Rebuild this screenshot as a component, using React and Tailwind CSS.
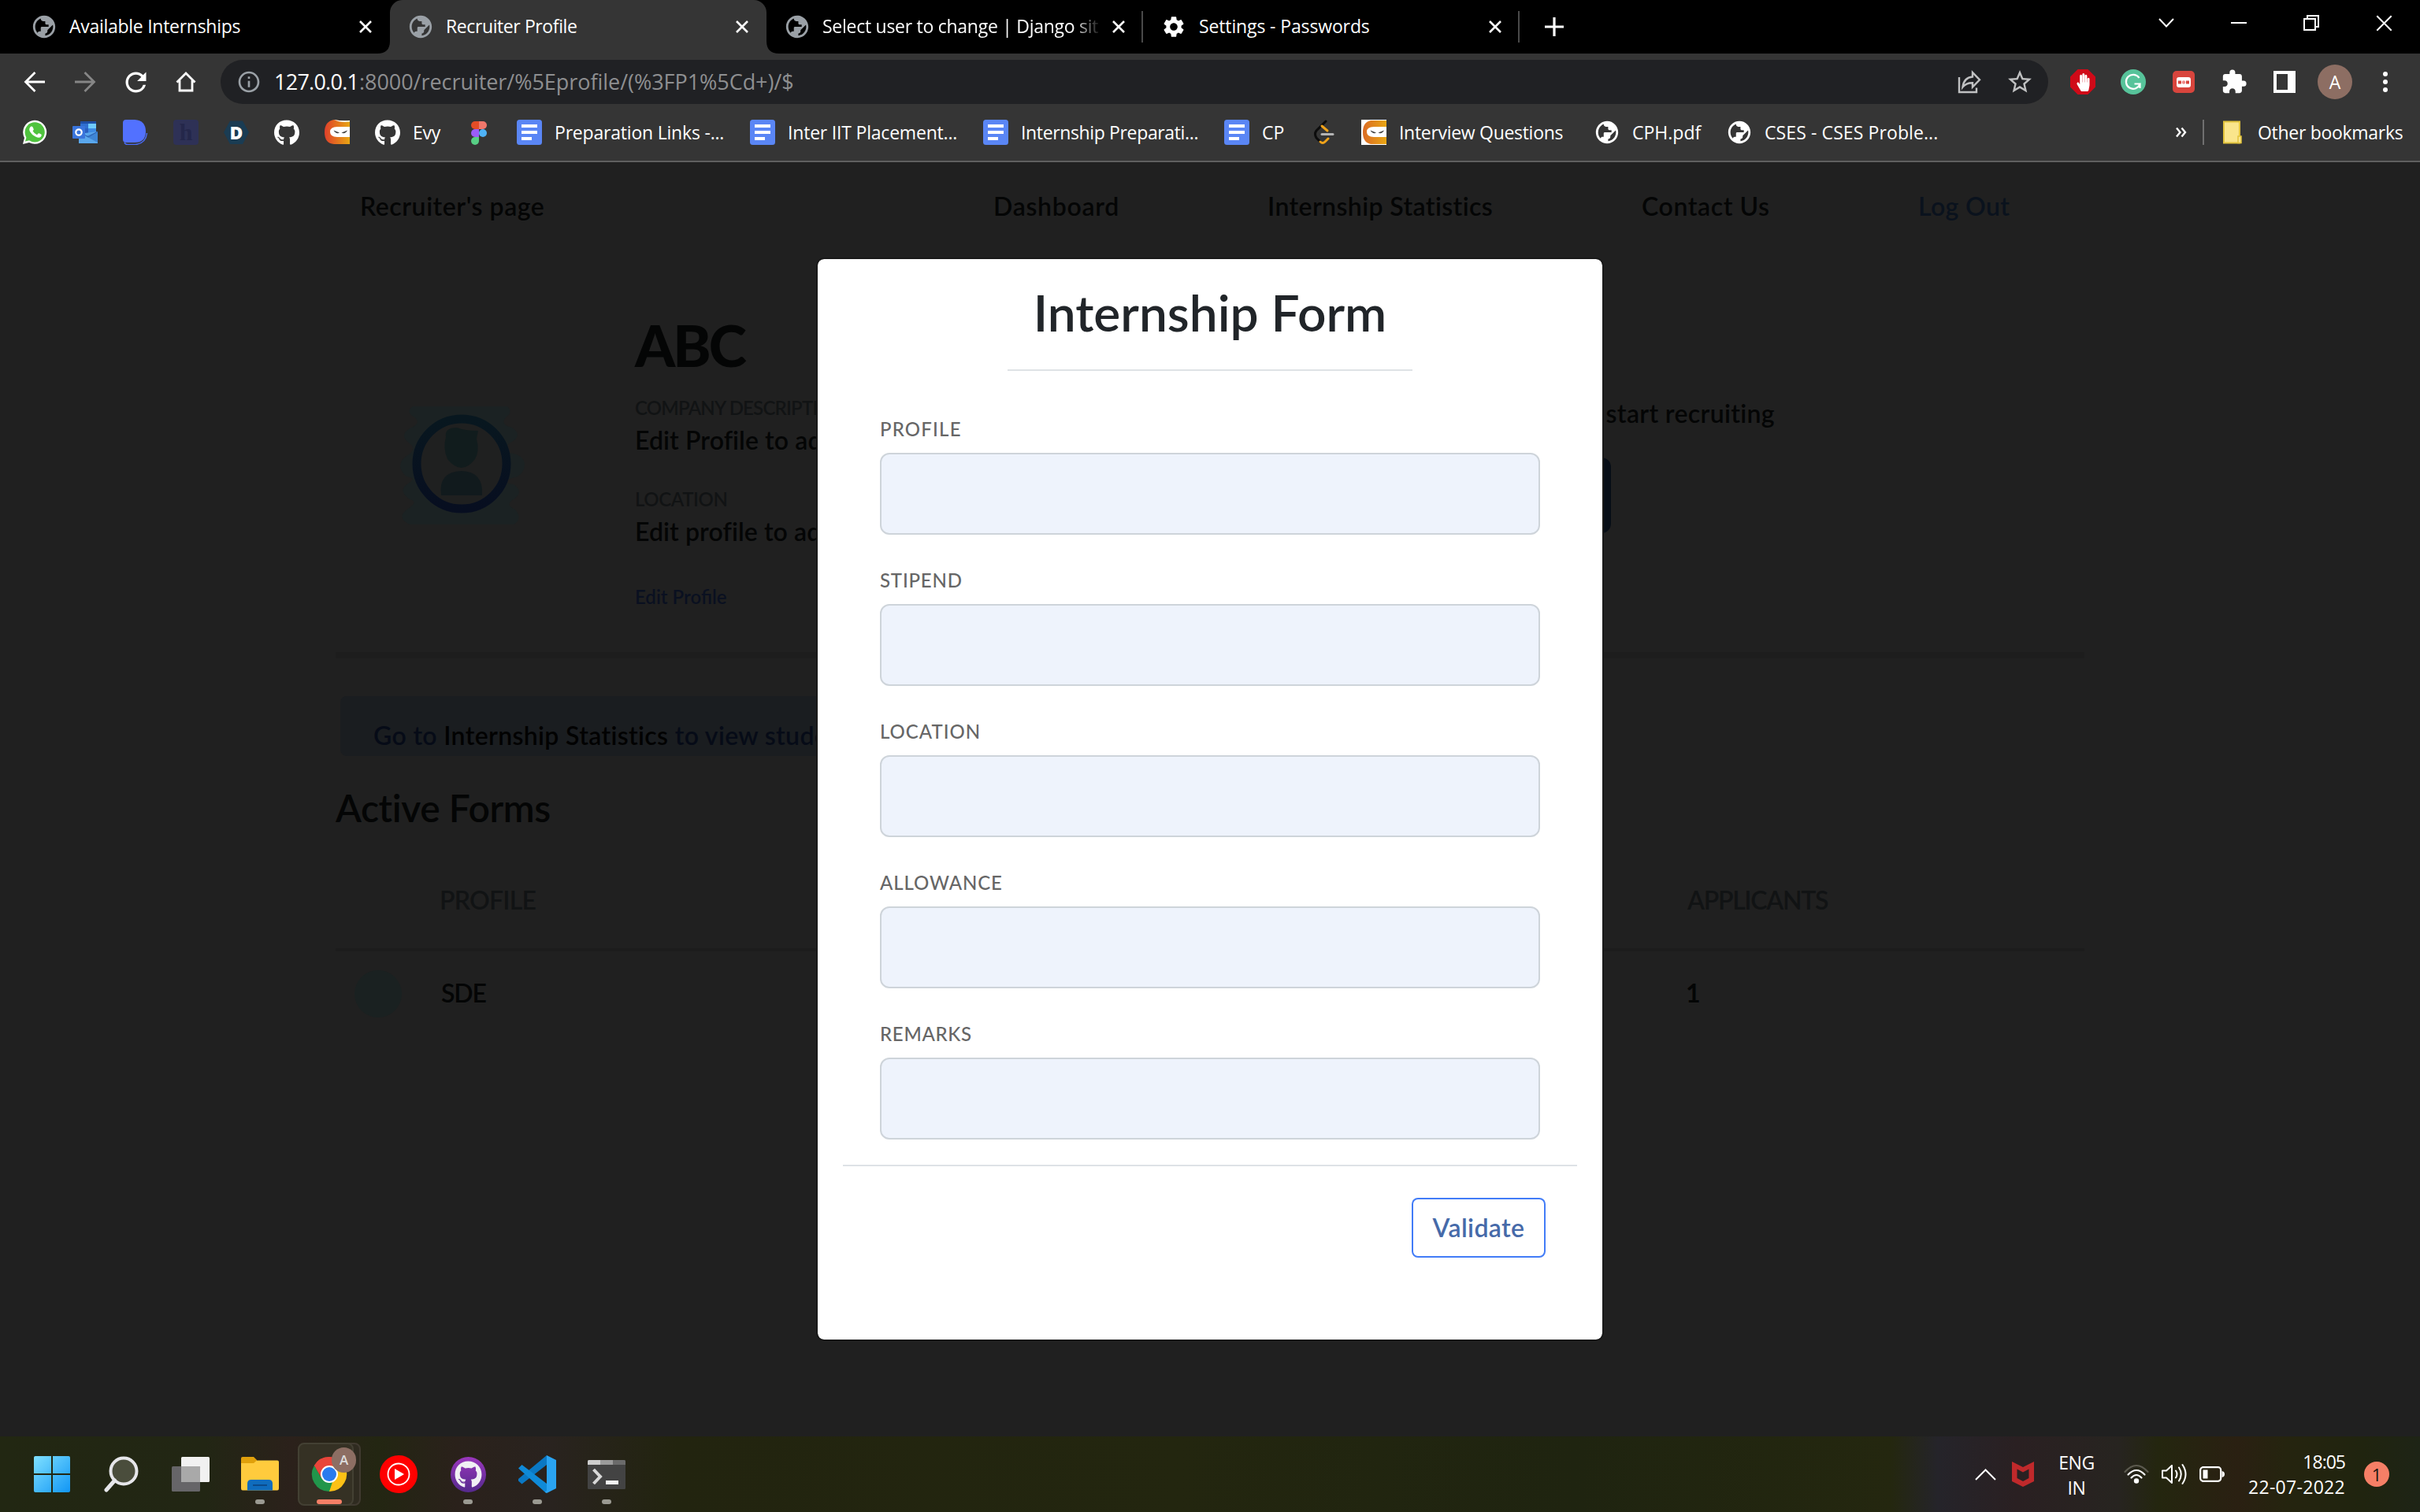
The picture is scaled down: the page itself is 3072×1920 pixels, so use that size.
import React from 'react';
import { MdPublic, MdSettings, MdRefresh, MdStarBorder, MdInfoOutline, MdExtension } from 'react-icons/md';
import { FaGithub, FaHandPaper } from 'react-icons/fa';

const UI = "font-['Open_Sans','Noto_Sans',sans-serif]";
const WEB = "font-['Lato','Open_Sans',sans-serif]";

/* ---------- icons ---------- */

const Cross = ({ s = 16, w = 2.6 }) => (
  <svg width={s} height={s} viewBox="0 0 16 16" stroke="#fff" strokeWidth={w} fill="none">
    <path d="M1 1L15 15M15 1L1 15" />
  </svg>
);

const DocsIcon = () => (
  <svg width="32" height="32" viewBox="0 0 32 32">
    <rect width="32" height="32" rx="3.5" fill="#5a86f5" />
    <path d="M6 6h20v4H6zM6 14h20v4H6zM6 22h13v4H6z" fill="#fff" />
  </svg>
);

const NinjaIcon = ({ light, id }) => (
  <svg width="32" height="32" viewBox="0 0 32 32">
    <defs>
      <linearGradient id={id}>
        <stop offset="0" stopColor={light ? '#db6b24' : '#e0402b'} />
        <stop offset="1" stopColor="#e8a613" />
      </linearGradient>
    </defs>
    {light && <rect width="32" height="32" fill="#fff" />}
    <path d={light ? 'M32 1v30H12Q2 29 2 16T12 1z' : 'M32 1Q22 2 12 0Q0 2 0 16T12 31H32z'} fill={`url(#${id})`} />
    {!light && <path d="M12 0Q22 2 32 1V2.5Q20 4 12 0z" fill="#fff" />}
    <path d="M32 9H16Q7 9 7 15.500T16 22H32z" fill="#fff" />
    <path d="M11.500 13.500L19 16.500Q15 19 11.500 13.500zM29 13.500L21.500 16.500Q26 19 29 13.500z" fill="#444" />
  </svg>
);

const OutlookIcon = () => (
  <svg width="32" height="32" viewBox="0 0 32 32">
    <path d="M10 2h20v10H10z" fill="#1f4fa5" />
    <path d="M10 5h10v7H10z" fill="#2f6fd0" />
    <path d="M20 5h10v7H20z" fill="#6fcbfb" />
    <path d="M10 11h10v7H10z" fill="#2a5fc0" />
    <path d="M20 11h10v7H20z" fill="#3d8ae4" />
    <path d="M8 18L32 15V30H8z" fill="#5aa7ec" />
    <path d="M32 15V29L17 21z" fill="#3f86d6" />
    <path d="M10 16L20 22L32 15" fill="none" stroke="#2b5eae" />
    <rect x="0" y="8" width="16" height="16" rx="1" fill="#3a75dc" />
    <circle cx="8" cy="16" r="3.700" fill="none" stroke="#fff" strokeWidth="2.200" />
  </svg>
);

const DIcon = () => (
  <svg width="32" height="32" viewBox="0 0 32 32">
    <path d="M2 29Q3 31.500 6 31.500H16Q29 30 30.500 17" fill="none" stroke="#4a6cf7" strokeWidth="1.600" />
    <path d="M4 0H15Q29 1 29 15T15 29H4Q0 29 0 25V4Q0 0 4 0z" fill="#5271ff" />
  </svg>
);

const HIcon = () => (
  <div className="flex h-8 w-8 items-center justify-center rounded bg-[#2e3156]">
    <span className="font-['Liberation_Serif',serif] text-[30px] leading-[28px] font-bold text-[#24274a]">h</span>
  </div>
);

const HexIcon = () => (
  <div className="relative flex h-8 w-8 items-center justify-center">
    <svg className="absolute inset-0" width="32" height="32" viewBox="0 0 32 32">
      <path d="M8 1.500H24L32 16L24 31H8L0 16z" fill="#1a3c53" />
    </svg>
    <span className={`${UI} relative text-[23px] leading-[32px] font-extrabold text-white`}>D</span>
  </div>
);

const FigmaIcon = () => (
  <svg width="32" height="32" viewBox="0 0 32 32">
    <path d="M16 2H11a5 5 0 0 0 0 10h5z" fill="#e44d26" />
    <path d="M16 2h5a5 5 0 0 1 0 10h-5z" fill="#f0776b" />
    <path d="M16 12H11a5 5 0 0 0 0 10h5z" fill="#9c5cf8" />
    <circle cx="21" cy="17" r="5" fill="#4fb3f7" />
    <path d="M11 22h5v5a5 5 0 1 1-5-5z" fill="#57cf85" />
  </svg>
);

const LeetIcon = () => (
  <svg width="32" height="32" viewBox="0 0 32 32" fill="none" strokeLinecap="round" strokeWidth="3">
    <path d="M19 2L7 14Q4 18 7 23L12 28" stroke="#0c0c0c" />
    <path d="M14 8L21 14" stroke="#f0a31a" />
    <path d="M22 24L18 28Q15 31 12 28" stroke="#f0a31a" />
    <path d="M14 18.500H28" stroke="#b4b4b4" />
  </svg>
);

const Whatsapp = () => (
  <svg width="32" height="32" viewBox="0 0 32 32">
    <path d="M1 31L3 23A15 15 0 1 1 9 29z" fill="#fff" />
    <circle cx="16.200" cy="15.800" r="12.600" fill="#4fc33e" />
    <path d="M4 27.500L6 21L10 26z" fill="#4fc33e" />
    <path d="M11.500 8.500Q13 8 13.800 9.800L14.800 12.200Q14.800 13.200 13.500 14.300Q15.500 17.800 19 19.200L20.500 17.600Q21.300 17 22.200 17.500L24.500 18.800Q25.200 19.500 24 21.500Q21.800 23.800 17.500 21.800Q12 19.300 9.500 14Q8.500 10.500 11.500 8.500z" fill="#fff" />
  </svg>
);

const Globe = ({ c }) => <MdPublic size={34} color={c} className="-mx-px shrink-0 -scale-x-100" />;

const Gh = () => <FaGithub size={33} color="#fff" />;

/* ---------- tab strip ---------- */

const TABS = [
  { t: 'Available Internships', k: 'tracking-[-0.28px]' },
  { t: 'Recruiter Profile', k: 'tracking-[-0.4px]', active: true },
  { t: 'Select user to change | Django sit', k: 'tracking-[-0.27px]', fade: true, sep: true },
  { t: 'Settings - Passwords', k: 'tracking-[-0.13px]', gear: true, sep: true },
];

const Tab = ({ tab }) => (
  <div className={`relative flex h-[68px] w-[478px] shrink-0 items-center ${tab.active ? 'rounded-t-2xl bg-[#353535]' : ''}`}>
    {tab.active && (
      <>
        <svg className="absolute bottom-0 -left-4" width="16" height="16"><path d="M16 0V16H0Q16 16 16 0z" fill="#353535" /></svg>
        <svg className="absolute -right-4 bottom-0" width="16" height="16"><path d="M0 0V16H16Q0 16 0 0z" fill="#353535" /></svg>
      </>
    )}
    <div className="ml-[22px] flex w-[34px] justify-center">
      {tab.gear ? <MdSettings size={32} color="#fff" /> : <Globe c="#9aa0a6" />}
    </div>
    <div className={`ml-[15px] h-[34px] w-[354px] text-[23px] leading-[32px] whitespace-nowrap text-white ${tab.k} ${tab.fade ? '[mask-image:linear-gradient(to_right,black_318px,transparent_354px)]' : ''}`}>{tab.t}</div>
    <div className="flex w-[44px] justify-center"><Cross /></div>
    {tab.sep && <div className="ml-auto h-10 w-0.5 bg-[#4a4a4a]" />}
  </div>
);

const TabStrip = () => (
  <div className="flex h-[68px] bg-black pl-[17px]">
    {TABS.map((t) => <Tab key={t.t} tab={t} />)}
    <div className="ml-[22px] flex w-[44px] items-center justify-center">
      <svg width="24" height="24" viewBox="0 0 24 24" stroke="#fff" strokeWidth="3.200"><path d="M12 0V24M0 12H24" /></svg>
    </div>
    <div className="ml-auto flex h-[58px]">
      <div className="flex w-[92px] items-center justify-center">
        <svg width="20" height="12" viewBox="0 0 20 12" fill="none" stroke="#fff" strokeWidth="2"><path d="M1 1L10 10.500L19 1" /></svg>
      </div>
      <div className="flex w-[92px] items-center justify-center"><div className="h-0.5 w-5 bg-white" /></div>
      <div className="flex w-[92px] items-center justify-center">
        <svg width="22" height="22" viewBox="0 0 22 22" fill="none" stroke="#fff" strokeWidth="2"><path d="M2 6H16V20H2zM6 6V2H20V16H16" /></svg>
      </div>
      <div className="flex w-[92px] items-center justify-center"><Cross s={21} w={1.500} /></div>
    </div>
  </div>
);

/* ---------- toolbar ---------- */

const Slot = ({ children }) => <div className="flex w-16 shrink-0 items-center justify-center">{children}</div>;

const Arrow = ({ c, flip }) => (
  <svg className={flip ? '-scale-x-100' : ''} width="28" height="28" viewBox="0 0 28 28" fill="none" stroke={c} strokeWidth="2.800">
    <path d="M27 14H3M14.500 2L2.500 14L14.500 26" />
  </svg>
);

const Toolbar = () => (
  <div className="flex h-[72px] bg-[#353535] pt-2">
    <div className="flex h-14 pl-3">
      <Slot><Arrow c="#fff" /></Slot>
      <Slot><Arrow c="#868686" flip /></Slot>
      <Slot><MdRefresh size={39} color="#fff" /></Slot>
      <Slot>
        <svg width="28" height="28" viewBox="0 0 28 28" fill="none" stroke="#fff" strokeWidth="2.800"><path d="M2.500 14.500L14 3L25.500 14.500M6 12V25H22V12" /></svg>
      </Slot>
    </div>
    <div className="ml-3 flex h-14 w-[2320px] items-center rounded-full bg-[#202124]">
      <MdInfoOutline size={32} color="#9aa0a6" className="ml-5" />
      <div className="ml-[16px] flex text-[27px] leading-[54px] whitespace-nowrap">
        <span className="w-[108px] tracking-[-0.75px] text-white">127.0.0.1</span>
        <span className="tracking-[-0.05px] text-[#8e8f91]">:8000/recruiter/%5Eprofile/(%3FP1%5Cd+)/$</span>
      </div>
      <div className="mr-1 ml-auto flex">
        <Slot>
          <svg width="30" height="30" viewBox="0 0 30 30" fill="none" stroke="#c0c1c2" strokeWidth="2.400">
            <path d="M2 9V28H24V22.500" />
            <path d="M19 3V8.500Q8 9.500 6.500 21.500Q11 16 19 16.200V21.500L28 12.300z" />
          </svg>
        </Slot>
        <Slot><MdStarBorder size={36} color="#c0c1c2" /></Slot>
      </div>
    </div>
    <div className="ml-3 flex h-14">
      <Slot>
        <div className="flex h-8 w-8 items-center justify-center bg-[#d00a18] [clip-path:polygon(30%_0,70%_0,100%_30%,100%_70%,70%_100%,30%_100%,0_70%,0_30%)]">
          <FaHandPaper size={23} color="#fff" className="scale-x-80" />
        </div>
      </Slot>
      <Slot>
        <svg width="32" height="32" viewBox="0 0 32 32">
          <circle cx="16" cy="16" r="16" fill="#57c39a" />
          <path d="M23.500 11A9 9 0 1 0 24.500 18.500H17.500M24.500 18V24" fill="none" stroke="#fff" strokeWidth="2.200" />
        </svg>
      </Slot>
      <Slot>
        <svg width="28" height="28" viewBox="0 0 28 28">
          <rect width="28" height="28" rx="5" fill="#d8453d" />
          <rect x="5" y="8" width="18" height="13" rx="3" fill="#fff" />
          <path d="M7 14.500h4M17 14.500h4" stroke="#d8453d" strokeWidth="4" />
          <circle cx="14" cy="14.500" r="2.200" fill="#e88" />
        </svg>
      </Slot>
      <Slot><MdExtension size={34} color="#fff" /></Slot>
      <Slot><div className="h-7 w-7 border-4 border-r-[10px] border-white" /></Slot>
      <Slot><div className="flex h-11 w-11 items-center justify-center rounded-full bg-[#8d6e63] text-[23px] leading-[44px] text-white">A</div></Slot>
      <Slot>
        <div className="flex flex-col gap-1">
          <div className="h-1.5 w-1.5 rounded-full bg-white" />
          <div className="h-1.5 w-1.5 rounded-full bg-white" />
          <div className="h-1.5 w-1.5 rounded-full bg-white" />
        </div>
      </Slot>
    </div>
  </div>
);

/* ---------- bookmarks ---------- */

const BOOKMARKS = [
  { i: <Whatsapp />, w: 'w-16' },
  { i: <OutlookIcon />, w: 'w-16' },
  { i: <DIcon />, w: 'w-16' },
  { i: <HIcon />, w: 'w-16' },
  { i: <HexIcon />, w: 'w-16' },
  { i: <Gh />, w: 'w-16' },
  { i: <NinjaIcon id="n1" />, w: 'w-16' },
  { i: <Gh />, t: 'Evy', w: 'w-[116px]', k: 'tracking-[-0.2px]' },
  { i: <FigmaIcon />, w: 'w-16' },
  { i: <DocsIcon />, t: 'Preparation Links -...', w: 'w-[296px]', k: 'tracking-[-0.2px]' },
  { i: <DocsIcon />, t: 'Inter IIT Placement...', w: 'w-[296px]', k: 'tracking-[-0.2px]' },
  { i: <DocsIcon />, t: 'Internship Preparati...', w: 'w-[306px]', k: 'tracking-[-0.36px]' },
  { i: <DocsIcon />, t: 'CP', w: 'w-[110px]', k: 'tracking-[0px]' },
  { i: <LeetIcon />, w: 'w-16' },
  { i: <NinjaIcon id="n2" light />, t: 'Interview Questions', w: 'w-[296px]', k: 'tracking-[-0.3px]' },
  { i: <Globe c="#fff" />, t: 'CPH.pdf', w: 'w-[168px]', k: 'tracking-[0px]' },
  { i: <Globe c="#fff" />, t: 'CSES - CSES Proble...', w: 'w-[300px]', k: 'tracking-[0.1px]' },
];

const BookmarksBar = () => (
  <div className="flex h-[66px] items-start border-b-2 border-[#5f5f5f] bg-[#353535] pt-3 pl-7 text-[23px] leading-[30px] whitespace-nowrap text-white">
    {BOOKMARKS.map((b, n) => (
      <div key={n} className={`flex h-8 shrink-0 items-center ${b.w}`}>
        <div className="flex w-8 shrink-0 justify-center">{b.i}</div>
        {b.t && <span className={`mt-[-1px] ml-4 ${b.k}`}>{b.t}</span>}
      </div>
    ))}
    <div className="ml-auto flex h-8 items-center pr-[21px]">
      <svg width="14" height="14" viewBox="0 0 14 14" fill="none" stroke="#fff" strokeWidth="2.400"><path d="M1 1.500L5.500 7L1 12.500M7.500 1.500L12 7L7.500 12.500" /></svg>
      <div className="ml-5 h-8 w-0.5 bg-[#6f6f6f]" />
      <svg className="ml-[24px]" width="26" height="30" viewBox="0 0 26 30">
        <path d="M1 1.500H21V28.500H1z" fill="#fae58c" stroke="#e2c33c" strokeWidth="2" />
        <path d="M19 20H23V28.500H19z" fill="#fae58c" stroke="#e2c33c" strokeWidth="1.500" />
      </svg>
      <span className="mt-[-1px] ml-[18px] w-[185px] tracking-[-0.3px]">Other bookmarks</span>
    </div>
  </div>
);

/* ---------- page behind the dialog ---------- */

const Avatar = () => (
  <svg width="160" height="152" viewBox="0 0 160 152">
    <defs>
      <linearGradient id="ring" x1="0" y1="0" x2="0" y2="1">
        <stop offset="0" stopColor="#08171f" />
        <stop offset="1" stopColor="#070e20" />
      </linearGradient>
    </defs>
    <path d="M18 1H138Q146 8 136 15Q128 24 144 28Q158 37 144 46Q132 52 140 60Q160 62 160 76Q158 90 144 92Q130 98 146 100Q160 110 146 119Q134 126 148 132Q158 144 146 151H14Q-4 142 12 131Q26 122 14 119Q-2 108 12 99Q24 92 10 90Q-6 76 10 64Q24 56 14 48Q0 38 14 29Q30 22 20 15Q8 8 18 1z" fill="#1b2223" />
    <circle cx="80" cy="74" r="57" fill="#1f2020" stroke="url(#ring)" strokeWidth="11" />
    <path d="M60 40Q58 28 74 28Q84 32 101 32L99 42Q103 58 97 68Q80 90 62 68Q56 54 60 40z" fill="#111c1d" />
    <path d="M54 114Q50 84 80 83Q108 84 106 114z" fill="#111a1d" />
  </svg>
);

const PageBehind = () => (
  <div className={`${WEB} h-[1618px] bg-[#202020] font-semibold whitespace-nowrap text-[#040505]`}>
    <nav className="flex h-[108px] items-center pt-[3px] text-[32px] leading-[40px]">
      <div className="ml-[457px] w-[804px] tracking-[0.55px]">Recruiter&apos;s page</div>
      <div className="w-[348px] tracking-[0.7px]">Dashboard</div>
      <div className="w-[475px] tracking-[0.4px]">Internship Statistics</div>
      <div className="w-[351px] tracking-[0.6px]">Contact Us</div>
      <div className="tracking-[0.4px] text-[#0a121d]">Log Out</div>
    </nav>

    <div className="mx-auto w-[2220px]">
      <div className="flex h-[514px]">
        <div className="mt-[201px] ml-[80px] w-[300px]"><Avatar /></div>
        <div className="w-[1100px] pt-[87px]">
          <h1 className="h-[74px] text-[73px] leading-[74px] font-black tracking-[-3px]">ABC</h1>
          <p className="mt-7 text-[24px] leading-[30px] tracking-[-0.8px] text-[#111314]">COMPANY DESCRIPTION</p>
          <p className="mt-1.5 text-[32px] leading-[40px] tracking-[0.1px]">Edit Profile to add</p>
          <p className="mt-10 text-[24px] leading-[30px] tracking-[-0.4px] text-[#111314]">LOCATION</p>
          <p className="mt-1.5 text-[32px] leading-[40px] tracking-[0.1px]">Edit profile to add</p>
          <p className="mt-12 text-[24px] leading-[30px] text-[#0a1020]">Edit Profile</p>
        </div>
        <div className="flex h-[480px] w-[347px] flex-col items-end pt-[191px]">
          <p className="text-[32px] leading-[40px] tracking-[0.35px]">start recruiting</p>
          <div className="mt-[36px] mr-[208px] h-24 w-[200px] rounded-xl bg-[#060d16]" />
        </div>
      </div>
      <div className="h-2 bg-[#1d1d1d]" />
      <div className="mt-12 ml-1.5 h-[76px] w-[900px] rounded-lg bg-[#1a1d20] pt-[30px] pl-[42px] text-[32px] leading-[40px] tracking-[0.35px] text-[#060b17]">
        Go to <span className="text-[#020202]">Internship Statistics</span> to view students
      </div>
      <h2 className="mt-[36px] text-[48px] leading-[60px] tracking-[-0.4px]">Active Forms</h2>
      <div className="mt-[67px] flex h-[81px] text-[32px] leading-[40px] text-[#111314]">
        <span className="ml-[132px] w-[1584px] tracking-[-0.8px]">PROFILE</span>
        <span className="tracking-[-1.3px]">APPLICANTS</span>
      </div>
      <div className="h-1 bg-[#1c1c1c]" />
      <div className="flex h-[108px] items-center text-[32px] leading-[40px]">
        <div className="ml-6 h-[60px] w-[60px] rounded-full bg-[#1a2121]" />
        <span className="mt-[-2px] ml-[50px] w-[1580px] tracking-[-1.2px]">SDE</span>
        <span className="mt-[-2px] font-bold">1</span>
      </div>
    </div>
  </div>
);

/* ---------- dialog ---------- */

const FIELDS = [
  { t: 'PROFILE', k: 'tracking-[1.2px]' },
  { t: 'STIPEND', k: 'tracking-[0.8px]' },
  { t: 'LOCATION', k: 'tracking-[1px]' },
  { t: 'ALLOWANCE', k: 'tracking-[0.9px]' },
  { t: 'REMARKS', k: 'tracking-[0.7px]' },
];

const Dialog = () => (
  <div className={`${WEB} absolute top-[329px] left-[1038px] h-[1372px] w-[996px] rounded-lg bg-white font-semibold outline-2 outline-[#191919]`}>
    <h2 className="pt-[28px] text-center text-[64px] leading-[80px] text-[#212529]">Internship Form</h2>
    <div className="mx-auto mt-[32px] h-0.5 w-[514px] bg-[#dee2e6]" />
    <div className="mt-[59px] flex flex-col gap-[43px] px-[79px]">
      {FIELDS.map((f) => (
        <label key={f.t} className="block">
          <span className={`block h-[30px] text-[24px] leading-[30px] font-medium text-[#666] ${f.k}`}>{f.t}</span>
          <input className="mt-[15px] block h-[104px] w-[838px] rounded-xl border-2 border-[#ced4da] bg-[#eef3fc] px-6" />
        </label>
      ))}
    </div>
    <div className="mx-8 mt-8 h-0.5 bg-[#dee2e6]" />
    <div className="mt-10 flex justify-end pr-[72px]">
      <button className="h-[76px] w-[170px] rounded-lg border-2 border-[#427cf7] text-[32px] leading-[72px] font-semibold tracking-[0.4px] text-[#466aa9]">Validate</button>
    </div>
  </div>
);

/* ---------- taskbar ---------- */

const TaskItem = ({ children, dot }) => (
  <div className="relative flex w-[88px] items-center justify-center">
    {children}
    {dot && <div className="absolute bottom-[10px] h-1.5 w-3 rounded-full bg-[#9b9a92]" />}
  </div>
);

const Taskbar = () => (
  <div className="flex h-24 bg-[linear-gradient(90deg,#222712_0,#222614_260px,#2b211b_370px,#232612_480px,#2a211b_580px,#29231f_700px,#22240f_860px,#23260f_1500px,#1f2410_2000px,#24270f_2400px,#25242a_2460px,#2a2022_2560px,#272420_2690px,#24260f_2740px,#2a2012_2840px,#25240f_2900px,#20240f_3000px,#1e2416_3072px)] pl-[22px] text-[23px] text-white">
    <TaskItem>
      <svg width="46" height="46" viewBox="0 0 46 46">
        <defs><linearGradient id="win" x1="0" y1="0" x2="1" y2="1" gradientUnits="objectBoundingBox"><stop offset="0" stopColor="#7fe0ff" /><stop offset="1" stopColor="#1196f5" /></linearGradient></defs>
        <path d="M2 0H22V22H0V2Q0 0 2 0zM24 0H44Q46 0 46 2V22H24zM0 24H22V46H2Q0 46 0 44zM24 24H46V44Q46 46 44 46H24z" fill="url(#win)" />
      </svg>
    </TaskItem>
    <TaskItem>
      <svg width="46" height="46" viewBox="0 0 46 46" fill="none" stroke="#e6e6ea" strokeLinecap="round">
        <circle cx="26" cy="19" r="16.500" strokeWidth="4" fill="#4a4d3c" />
        <path d="M14.500 31L4 43" strokeWidth="5" />
      </svg>
    </TaskItem>
    <TaskItem>
      <svg width="48" height="44" viewBox="0 0 48 44">
        <rect x="12" y="0" width="36" height="32" rx="1.500" fill="#f1f1f1" />
        <rect x="0" y="12" width="36" height="32" rx="1.500" fill="#666568" />
        <path d="M12 12H36V32H12z" fill="#a9a9a9" />
      </svg>
    </TaskItem>
    <TaskItem dot>
      <svg width="48" height="44" viewBox="0 0 48 44">
        <path d="M2 0H16L20 4V12H0V2Q0 0 2 0z" fill="#e0a00b" />
        <path d="M0 8H16L20 4.500H46Q48 4.500 48 6.500V40Q48 42.500 46 42.500H2Q0 42.500 0 40z" fill="#ffcb3d" />
        <path d="M8 42.500V34Q8 29 13 29H35Q40 29 40 34V42.500z" fill="#0f6cbd" />
        <path d="M15 36H33" stroke="#0b4a8a" strokeWidth="2" />
      </svg>
    </TaskItem>
    <TaskItem>
      <div className="absolute top-2 left-[12px] h-20 w-[72px] rounded-lg border-2 border-[#403a30] bg-[#2f2b20]" />
      <div className="absolute top-2 left-1 flex h-20 w-[71px] items-center justify-center rounded-lg border-2 border-[#434033] bg-[#353124]">
        <svg className="ml-2" width="46" height="46" viewBox="0 0 46 46">
          <path d="M23 23L3.900 12A22 22 0 0 1 42.100 12z" fill="#e8453a" />
          <path d="M23 23L42.100 12A22 22 0 0 1 23 45z" fill="#fdc116" />
          <path d="M23 45A22 22 0 0 1 3.900 12L13.500 28.500Q18 34 27 33z" fill="#21964b" />
          <path d="M23 12.500H42.300L32 28z" fill="#fdc116" />
          <path d="M23 12.500H42.300A22 22 0 0 0 3.900 12L13.500 28.500z" fill="#e8453a" />
          <circle cx="23" cy="23" r="11" fill="#fff" />
          <circle cx="23" cy="23" r="9" fill="#2a7bee" />
        </svg>
      </div>
      <div className="absolute top-[14px] left-[47px] flex h-8 w-[31px] items-center justify-center rounded-full bg-[#8d6e63] text-[17px] leading-[32px] font-semibold text-[#ddd]">A</div>
      <div className="absolute bottom-[10px] left-[28px] h-1.5 w-8 rounded-full bg-[#f57f66]" />
    </TaskItem>
    <TaskItem>
      <svg width="48" height="48" viewBox="0 0 48 48">
        <circle cx="24" cy="24" r="24" fill="#f00" />
        <circle cx="24" cy="24" r="13.500" fill="none" stroke="#fff" strokeWidth="1.800" />
        <path d="M19 17L31 24L19 31z" fill="#fff" />
      </svg>
    </TaskItem>
    <TaskItem dot>
      <div className="flex h-[45px] w-[45px] items-center justify-center rounded-full bg-linear-to-b from-[#9a36bd] to-[#55298c]"><FaGithub size={35} color="#f0f0f4" /></div>
    </TaskItem>
    <TaskItem dot>
      <svg width="48" height="48" viewBox="0 0 48 48">
        <path d="M36 0V12L4.500 36.500L0 32.500V30z" fill="#0a78c4" />
        <path d="M0 16.500L4.500 12L36 36V47Q34 47 33 46z" fill="#0f8ad8" />
        <path d="M36 0L48 6V42L36 48Q34.500 47.500 33.500 46.500L36 45V0z" fill="#2aa4f2" />
      </svg>
    </TaskItem>
    <TaskItem dot>
      <svg width="48" height="37" viewBox="0 0 48 37">
        <rect width="48" height="37" rx="1.500" fill="#434343" />
        <path d="M0 1.500Q0 0 1.500 0H16V6H0z" fill="#cfcfcf" />
        <path d="M16 0H32V6H16z" fill="#9b9b9b" />
        <path d="M32 0H46.500Q48 0 48 1.500V6H32z" fill="#6b6b6b" />
        <path d="M7.500 12L16 21L7.500 30" fill="none" stroke="#d8d8d8" strokeWidth="4" />
        <path d="M23 26H39V31H23z" fill="#f2f2f2" />
      </svg>
    </TaskItem>

    <div className="ml-auto flex items-center">
      <div className="flex w-12 justify-center">
        <svg width="27" height="15" viewBox="0 0 27 15" fill="none" stroke="#fff" strokeWidth="2"><path d="M1 14L13.500 1.500L26 14" /></svg>
      </div>
      <div className="flex w-12 justify-center">
        <svg width="28" height="32" viewBox="0 0 28 32"><path d="M0 0L14 7L28 0V25L14 32L0 25zM6.500 9.500V21L14 25L21.500 21V9.500L14 13.500z" fill="#c0292b" fillRule="evenodd" /></svg>
      </div>
      <div className="flex w-[88px] flex-col items-center pt-0.5 leading-[32px] tracking-[-0.4px]"><span>ENG</span><span>IN</span></div>
      <div className="ml-2 flex w-12 justify-center">
        <svg width="32" height="26" viewBox="0 0 32 26" fill="none" strokeWidth="2.200" strokeLinecap="round">
          <path d="M1.500 10Q16 -6 30.500 10" stroke="#5c5a4f" />
          <path d="M5.500 13.500Q16 2.500 26.500 13.500M9.500 17.500Q16 10.500 22.500 17.500" stroke="#fff" />
          <circle cx="16" cy="21.500" r="3.200" fill="#fff" />
        </svg>
      </div>
      <div className="flex w-12 justify-center">
        <svg width="32" height="28" viewBox="0 0 32 28" fill="none" stroke="#fff" strokeWidth="2" strokeLinejoin="round" strokeLinecap="round">
          <path d="M1 9.500H6L13 3V25L6 18.500H1z" />
          <path d="M18 9.500Q21 14 18 18.500M22 5.500Q27.500 14 22 22.500M26.500 2Q34.500 14 26.500 26" />
        </svg>
      </div>
      <div className="flex w-12 justify-center">
        <svg width="32" height="20" viewBox="0 0 32 20">
          <rect x="1.200" y="1.200" width="26" height="17.600" rx="3.500" fill="none" stroke="#fff" strokeWidth="2.200" />
          <rect x="4.500" y="4.500" width="6" height="11" fill="#fff" />
          <path d="M28.500 6Q32 6.500 32 10T28.500 14z" fill="#fff" />
        </svg>
      </div>
      <div className="mt-[-1px] flex w-[145px] flex-col items-end leading-[32px]"><span className="tracking-[-1px]">18:05</span><span className="tracking-[0.3px]">22-07-2022</span></div>
      <div className="mr-[39px] ml-6 flex h-8 w-8 items-center justify-center rounded-full bg-[#f57f66] text-[22px] leading-[32px] text-[#1c1512]">1</div>
    </div>
  </div>
);

export default function App() {
  return (
    <div className={`${UI} relative h-[1920px] w-[3072px] overflow-hidden bg-[#202020]`}>
      <TabStrip />
      <Toolbar />
      <BookmarksBar />
      <PageBehind />
      <Taskbar />
      <Dialog />
    </div>
  );
}
